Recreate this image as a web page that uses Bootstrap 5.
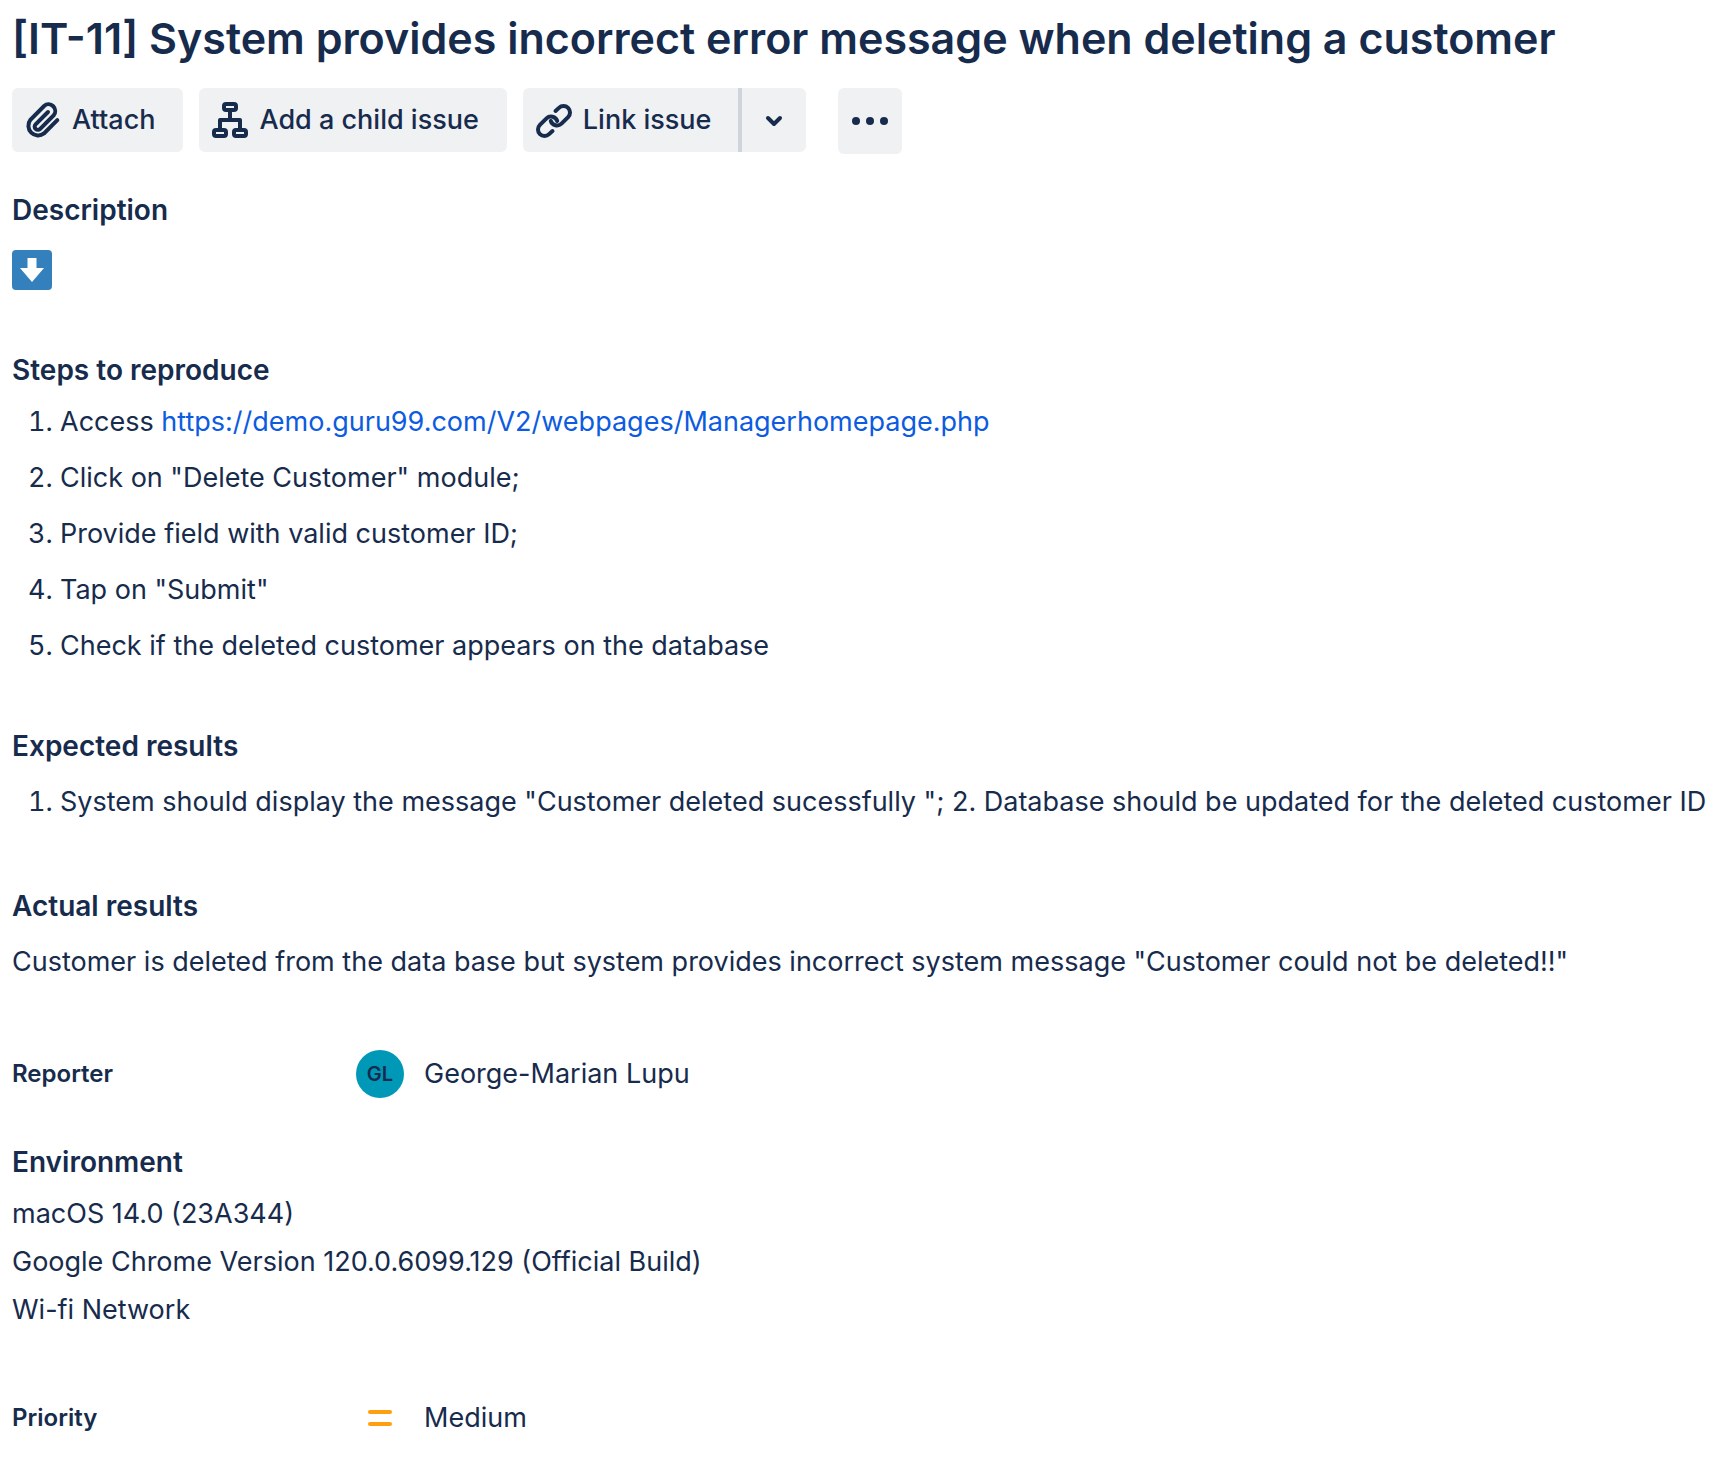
<!DOCTYPE html>
<html lang="en">
<head>
<meta charset="utf-8">
<meta name="viewport" content="width=device-width, initial-scale=1">
<title>[IT-11] System provides incorrect error message when deleting a customer</title>
<link rel="stylesheet" href="https://cdn.jsdelivr.net/npm/bootstrap@5.3.0/dist/css/bootstrap.min.css">
<style>
  body { font-family: Inter, "Liberation Sans", sans-serif; font-size: 27px; line-height: 48px; color: #172b4d; background: #fff; }
  .issue { padding: 10px 0 28px 12px; }
  .issue-title { font-size: 43px; line-height: 56px; font-weight: 600; margin: 0 0 22px; }
  .tool-row { gap: 16px; margin-bottom: 40px; }
  .btn-tool { --bs-btn-color: #172b4d; --bs-btn-bg: #f0f1f3; --bs-btn-hover-bg: #e2e4e9; --bs-btn-border-width: 0; --bs-btn-border-radius: 6px;
    --bs-btn-padding-x: 12px; --bs-btn-padding-y: 0; --bs-btn-font-family: inherit; --bs-btn-font-size: 27px; --bs-btn-font-weight: 500; --bs-btn-line-height: 32px;
    display: inline-flex; align-items: center; height: 64px; }
  .btn-tool.with-text { padding-left: 10px; padding-right: 28px; gap: 10px; }
  .btn-tool svg { width: 40px; height: 40px; flex: none; }
  .btn-square { width: 64px; justify-content: center; }
  .btn-more { height: 66px; margin-left: 16px; }
  .split-line { border-left: 4px solid #d0d4db; width: 68px; }
  .part-title { font-size: 28px; line-height: 32px; font-weight: 600; margin: 0 0 12px; }
  .part { margin-bottom: 64px; }
  .part-close { margin-bottom: 60px; }
  .step-list { padding-left: 48px; }
  .step-list li + li { margin-top: 8px; }
  .wide-title { margin-bottom: 16px; }
  .media-title { margin-bottom: 24px; }
  .emoji-down { width: 40px; height: 40px; }
  .field-row { min-height: 48px; }
  .field-label { font-size: 24px; font-weight: 600; width: 344px; }
  .field-icon { width: 48px; height: 48px; margin-right: 20px; }
  .avatar { background: #0098b7; font-size: 20px; font-weight: 600; }
  .issue a { color: #0c5be0; text-decoration: none; }
  .issue a:hover { text-decoration: underline; }
</style>
</head>
<body>
<main class="issue">
  <h1 class="issue-title">[IT-11] System provides incorrect error message when deleting a customer</h1>

  <div class="tool-row d-flex flex-wrap align-items-start">
    <button type="button" class="btn btn-tool with-text">
      <svg viewBox="3 4 40 40" fill="none" stroke="currentColor" stroke-width="4" stroke-linecap="round" aria-hidden="true"><path d="M38.300 24.200 25 37.400A9.700 9.700 0 0 1 11.400 23.800L25.100 10A6.700 6.700 0 0 1 34.600 19.400L21.200 32.900A3.200 3.200 0 0 1 16.600 28.300L29 16"/></svg>
      <span>Attach</span>
    </button>
    <button type="button" class="btn btn-tool with-text">
      <svg viewBox="4 4 40 40" fill="none" stroke="currentColor" stroke-width="4" stroke-linejoin="round" aria-hidden="true"><rect x="19" y="8" width="12" height="6" rx="2"/><rect x="9" y="34" width="12" height="6" rx="2"/><rect x="29" y="34" width="12" height="6" rx="2"/><path d="M25 14v10M15 34V24h20v10"/></svg>
      <span>Add a child issue</span>
    </button>
    <div class="btn-group" role="group" aria-label="Link issue">
      <button type="button" class="btn btn-tool with-text">
        <svg viewBox="3 4 40 40" fill="none" stroke="currentColor" stroke-width="4" stroke-linecap="round" aria-hidden="true"><path d="M25.500 15 28.900 11.900A6.500 6.500 0 0 1 38.100 21.100L31.500 27.600A6.500 6.500 0 0 1 20.800 25M22.500 35 19.100 38.100A6.500 6.500 0 0 1 9.900 28.900L16.500 22.400A6.500 6.500 0 0 1 27.200 25"/></svg>
        <span>Link issue</span>
      </button>
      <button type="button" class="btn btn-tool btn-square split-line" aria-label="More link options">
        <svg viewBox="0 0 40 40" fill="none" stroke="currentColor" stroke-width="4" stroke-linecap="round" stroke-linejoin="round" aria-hidden="true"><path d="M14 18l6 6 6-6"/></svg>
      </button>
    </div>
    <button type="button" class="btn btn-tool btn-square btn-more" aria-label="More actions">
      <svg viewBox="0 0 40 40" fill="currentColor" aria-hidden="true"><circle cx="6" cy="20" r="4"/><circle cx="20" cy="20" r="4"/><circle cx="34" cy="20" r="4"/></svg>
    </button>
  </div>

  <section class="part">
    <h2 class="part-title media-title">Description</h2>
    <svg class="emoji-down d-block" viewBox="0 0 40 40" role="img" aria-label="Down arrow"><rect width="40" height="40" rx="4" fill="#3480bd"/><path d="M15.500 8h9v10H32L20 32 8 18h7.500z" fill="#fff"/></svg>
  </section>

  <section class="part part-close">
    <h2 class="part-title">Steps to reproduce</h2>
    <ol class="step-list mb-0">
      <li>Access <a href="https://demo.guru99.com/V2/webpages/Managerhomepage.php">https://demo.guru99.com/V2/webpages/Managerhomepage.php</a></li>
      <li>Click on "Delete Customer" module;</li>
      <li>Provide field with valid customer ID;</li>
      <li>Tap on "Submit"</li>
      <li>Check if the deleted customer appears on the database</li>
    </ol>
  </section>

  <section class="part">
    <h2 class="part-title wide-title">Expected results</h2>
    <ol class="step-list mb-0">
      <li>System should display the message "Customer deleted sucessfully "; 2. Database should be updated for the deleted customer ID</li>
    </ol>
  </section>

  <section class="part">
    <h2 class="part-title wide-title">Actual results</h2>
    <p class="mb-0">Customer is deleted from the data base but system provides incorrect system message "Customer could not be deleted!!"</p>
  </section>

  <div class="field-row d-flex align-items-center mb-5">
    <div class="field-label">Reporter</div>
    <div class="field-icon avatar rounded-circle d-flex align-items-center justify-content-center">GL</div>
    <div>George-Marian Lupu</div>
  </div>

  <section class="part part-close">
    <h2 class="part-title">Environment</h2>
    <p class="mb-0">macOS 14.0 (23A344)<br>Google Chrome Version 120.0.6099.129 (Official Build)<br>Wi-fi Network</p>
  </section>

  <div class="field-row d-flex align-items-center">
    <div class="field-label">Priority</div>
    <svg class="field-icon" viewBox="0 0 48 48" fill="none" stroke="#ff9f0f" stroke-width="4" stroke-linecap="round" aria-hidden="true"><path d="M14 18h20M14 30h20"/></svg>
    <div>Medium</div>
  </div>
</main>
<script src="https://cdn.jsdelivr.net/npm/bootstrap@5.3.0/dist/js/bootstrap.bundle.min.js"></script>
</body>
</html>
